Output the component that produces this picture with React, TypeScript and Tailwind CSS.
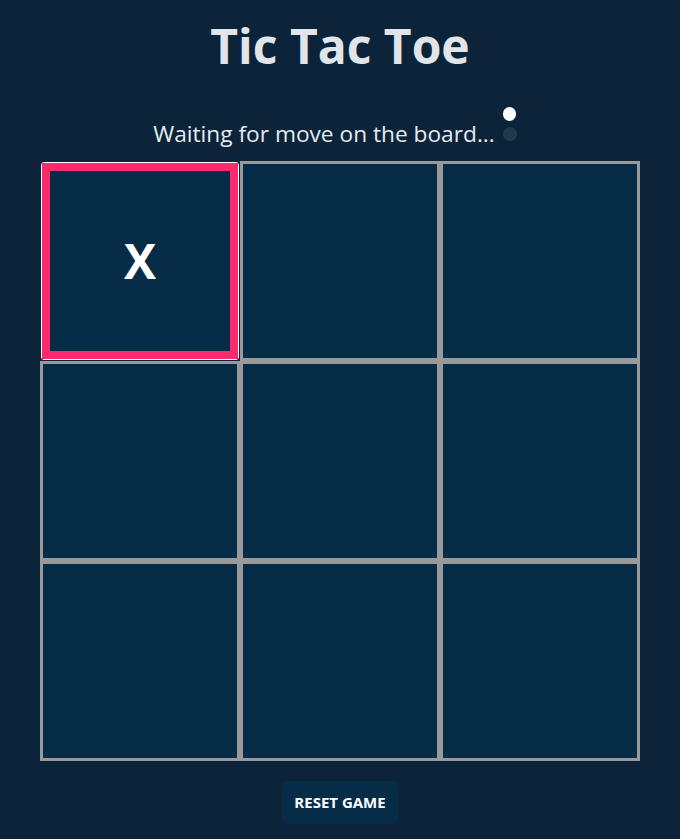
import * as React from 'react';

const font = { fontFamily: '"Open Sans", "Noto Sans", sans-serif' };

export default function App() {
  const [cells, setCells] = React.useState<string[]>(['X', '', '', '', '', '', '', '', '']);
  const [selected, setSelected] = React.useState(0);

  const reset = () => {
    setCells(['', '', '', '', '', '', '', '', '']);
    setSelected(-1);
  };

  return (
    <div className="min-h-screen w-full bg-[#0b2439] flex flex-col items-center" style={font}>
      <h1 className="pt-[22px] text-[48px] leading-none font-bold text-[#e1e5ea]">Tic Tac Toe</h1>

      <div className="mt-[37px] flex items-end justify-center">
        <span className="text-[22.7px] leading-[32px] text-[#e6eaee]">Waiting for move on the board...</span>
        <span className="ml-[8px] mr-[10px] mb-[9px] flex flex-col items-center gap-[6px]">
          <span className="block w-[13px] h-[14px] rounded-full bg-white" />
          <span className="block w-[14px] h-[14px] rounded-full bg-white/10" />
        </span>
      </div>

      <div className="mt-[11px] w-[600px] grid grid-cols-3">
        {cells.map((c, i) =>
          i === selected ? (
            <div key={i} className="h-[200px] p-px">
              <div className="h-full rounded-[3px] border border-white">
                <div className="h-full border-[8px] border-[#ff2a6d] bg-[#072c48] flex items-center justify-center">
                  <span className="text-[48px] font-bold text-white leading-none">{c}</span>
                </div>
              </div>
            </div>
          ) : (
            <div
              key={i}
              onClick={() => setSelected(i)}
              className="h-[200px] border-[3px] border-[#9a9a9a] bg-[#072c48] flex items-center justify-center"
            >
              <span className="text-[48px] font-bold text-white leading-none">{c}</span>
            </div>
          )
        )}
      </div>

      <button
        onClick={reset}
        className="mt-5 w-[116px] h-[43px] rounded-md bg-[#072c48] text-[15px] font-bold text-white"
      >
        RESET GAME
      </button>
    </div>
  );
}
